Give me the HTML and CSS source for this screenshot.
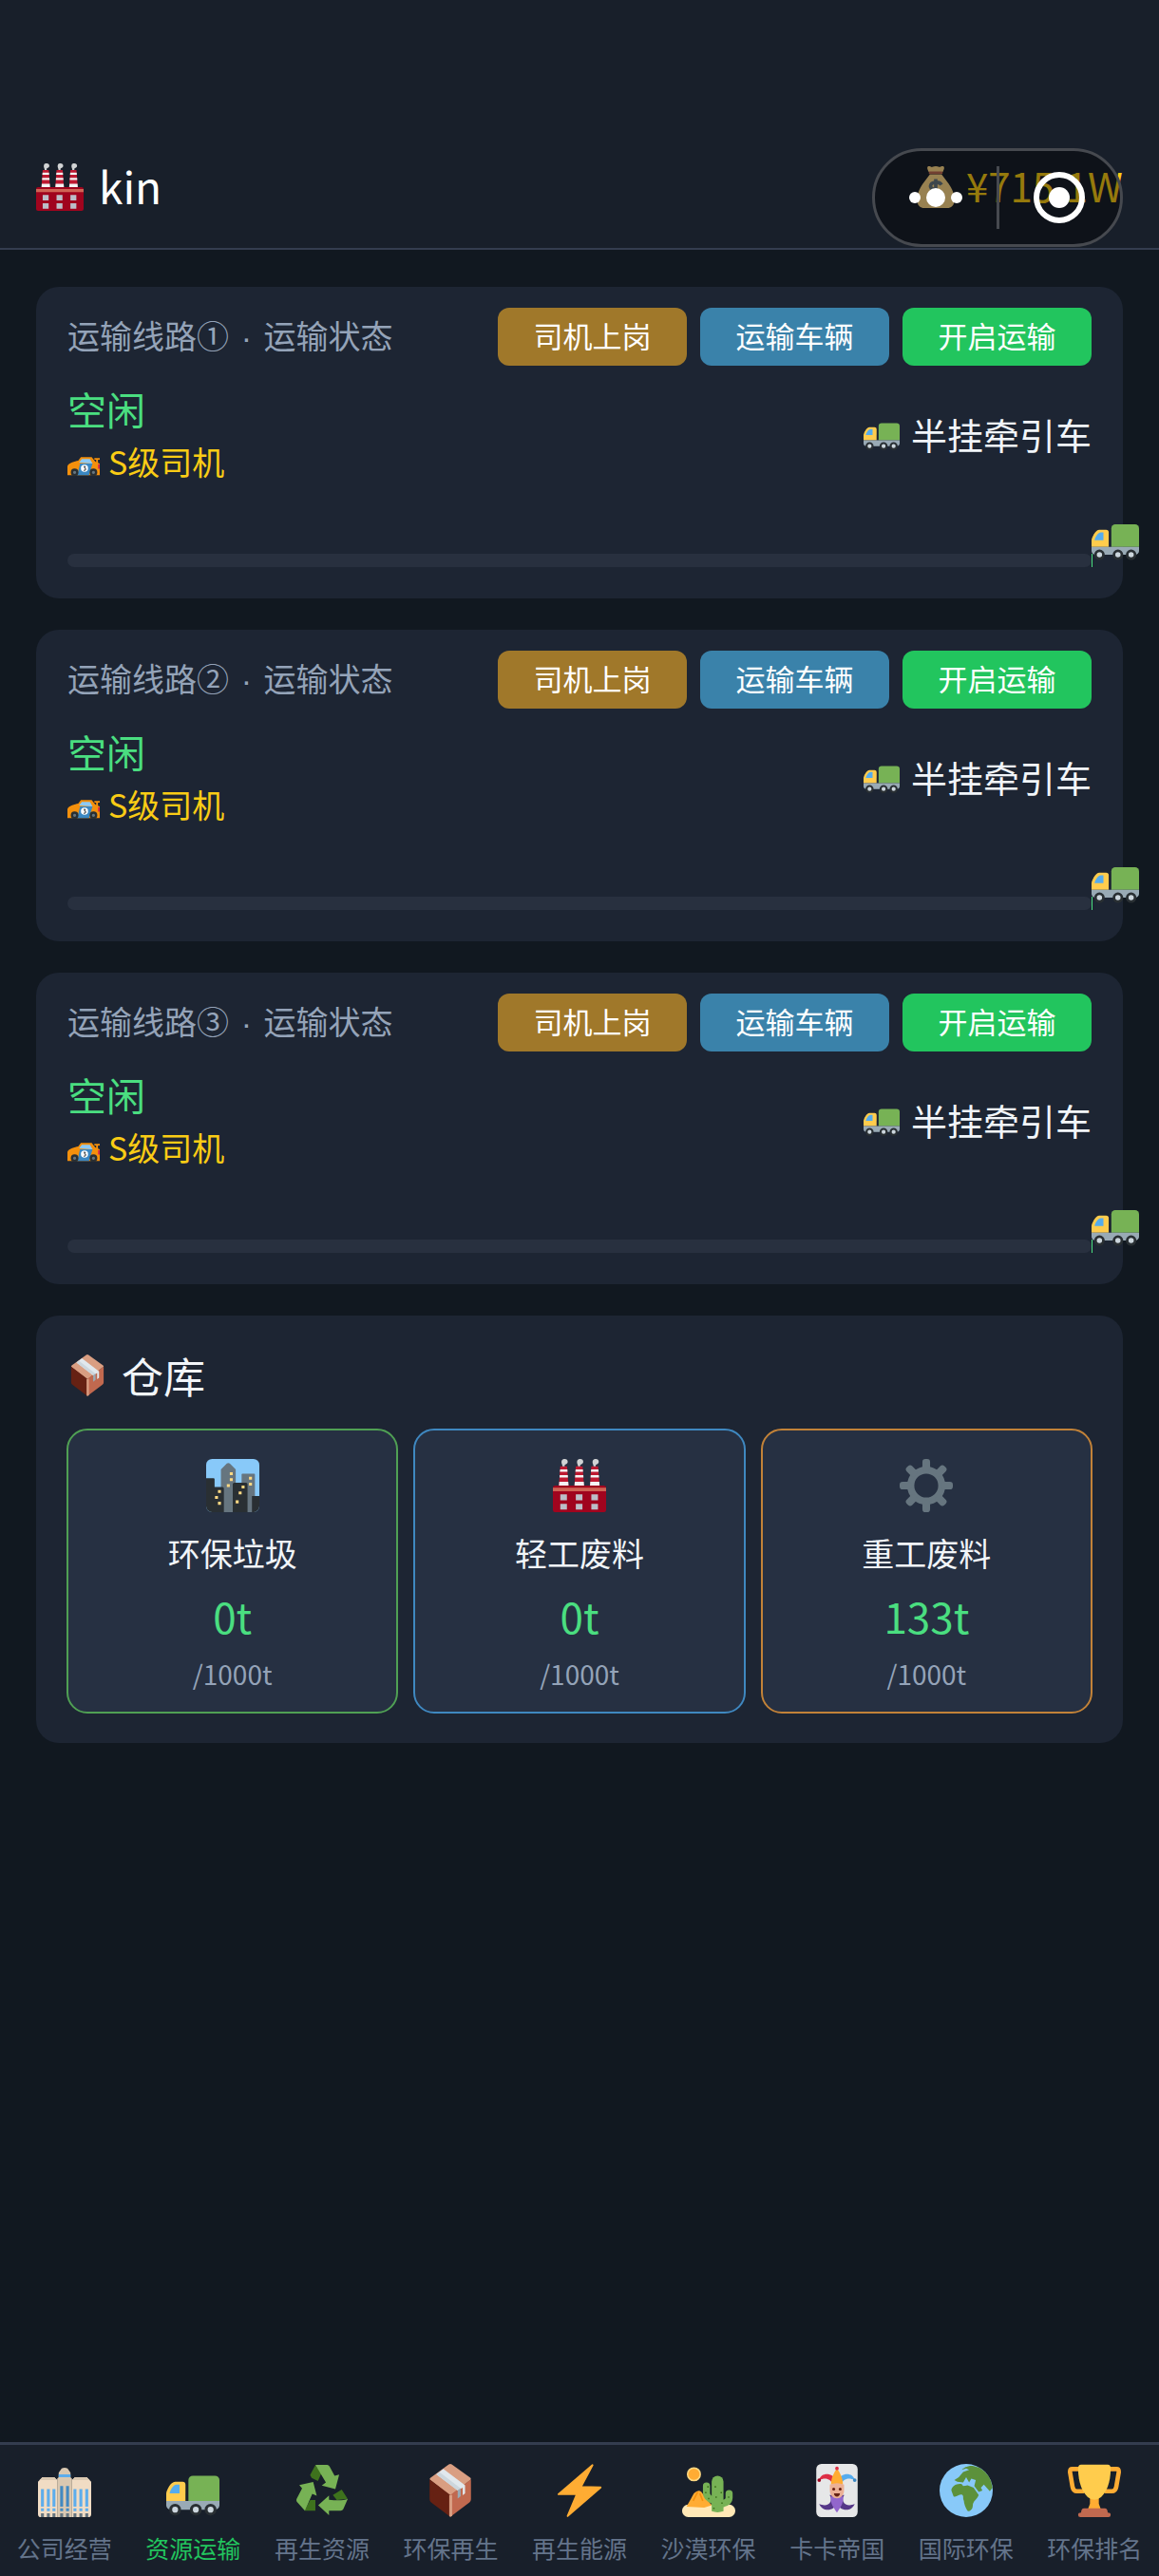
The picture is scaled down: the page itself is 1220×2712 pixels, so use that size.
FILE: index.html
```html
<!DOCTYPE html>
<html lang="zh-CN">
<head>
  <meta charset="UTF-8" />
  <meta name="viewport" content="width=device-width, initial-scale=1.0" />
  <title>资源运输</title>
  <link rel="stylesheet" href="styles.css">
</head>
<body>

  <!-- ICON SPRITES -->
  <svg class="sprites" aria-hidden="true">
    <symbol id="truck" viewBox="0 0 36 36">
      <path fill="#77B255" d="M15 11a3 3 0 0 1 3-3h15a3 3 0 0 1 3 3v14H15z"/>
      <path fill="#FFCC4D" d="M0 25v-5c0-2 3-8 6-8h5a2 2 0 0 1 2 2v11z"/>
      <path fill="#55ACEE" d="M2.200 20c.5-2 2.300-6 4.800-6h2v6z"/>
      <path fill="#99AAB5" d="M0 25h36v3a3 3 0 0 1-3 3H3a3 3 0 0 1-3-3z"/>
      <g fill="#CCD6DD" stroke="#292F33" stroke-width="2"><circle cx="6" cy="31" r="3"/><circle cx="20" cy="31" r="3"/><circle cx="30" cy="31" r="3"/></g>
    </symbol>

    <symbol id="factory" viewBox="0 0 36 36">
      <g id="chimney">
        <path fill="#BE1931" d="M5 5h4.600l1 14H4z"/>
        <path fill="#F4F4F4" d="M4.900 7h4.900l.1 1.600H4.700zM4.600 11h5.500l.1 1.600H4.500zM4.300 15.500h6.100l.2 2.500H4.100z"/>
        <path fill="#D1D3D4" d="M6.500 5c0-1-.7-1.500-.7-3A2 2 0 0 1 8 0c1.500 0 2.200 1 2 2.200S8.700 3.500 8 4v1z"/>
      </g>
      <use href="#chimney" x="10.500"/>
      <use href="#chimney" x="21"/>
      <rect y="18" width="36" height="18" rx="1.500" fill="#A0041E"/>
      <path fill="#CF6455" d="M0 19.500h36v2.300H0z"/>
      <path fill="#BCBEC8" d="M5 24h4.500v4H5zM15.500 24H20v4h-4.500zM26 24h4.500v4H26zM5 30.300h4.500v4H5zM15.500 30.300H20v4h-4.500zM26 30.300h4.500v4H26z"/>
    </symbol>

    <symbol id="money" viewBox="0 0 36 36">
      <path fill="#FDD888" d="M13 7h10l6 8c3 4 5 9 5 14 0 5-3 7-6 7H8c-3 0-6-2-6-7 0-5 2-10 5-14z"/>
      <path fill="#FDD888" d="M12 5c-1-2-2-4-.5-5C13-.5 14 1 15 .7S17 0 18 0s2 .5 3 .7S23-.5 24.500 0c1.500 1 .5 3-.5 5z"/>
      <rect x="12" y="4.500" width="12" height="2.300" rx="1" fill="#BF6952"/>
      <path fill="none" stroke="#67757F" stroke-width="3" d="M23 16c-2-3-9-3-9.500 1S23 20 23.500 24 16 29 13 25M18 11v19"/>
    </symbol>

    <symbol id="car" viewBox="0 0 36 36">
      <path fill="#F4900C" d="M0 33V23c2-4 8-5 12-6l3-4h12l4 5 5 2v13z"/>
      <path fill="#F4900C" d="M30 14h6v2h-2v5h-2v-5h-2z"/>
      <path fill="#8CCAF7" d="M13 19l3-4h9l3 5z"/>
      <path fill="#3B88C3" d="M14 20h14l-4 13H11z"/>
      <path fill="#DD2E44" d="M34 21h2v5h-2z"/>
      <circle cx="19" cy="25.500" r="4" fill="#FFF"/>
      <path fill="none" stroke="#292F33" stroke-width="1" d="M18 23.500h2l-1 1.700c2 0 2 2.500 0 2.500h-1"/>
      <g fill="#66757F" stroke="#292F33" stroke-width="2.500"><circle cx="8" cy="30" r="3"/><circle cx="29" cy="30" r="3"/></g>
    </symbol>

    <symbol id="package" viewBox="0 0 36 36">
      <path fill="#D99E82" d="M17 .4q1-.7 2 0l12.500 9q.8.7 0 1.500L18 21.500 4.500 11q-.8-.8 0-1.500z"/>
      <path fill="#662113" d="M4 10.500l14 10.500v14.800L5 26q-1-.7-1-2z"/>
      <path fill="#C1694F" d="M32 10.500L18 21v14.800L31 26q1-.7 1-2z"/>
      <path fill="#D99E82" d="M17.300 21h2v14.200l-1.300.6-.7-.4z"/>
      <path fill="#E1E8ED" d="M8.600 7l4.700-3.700L28 14.500V20l-1.600 1.200V16L23 18z"/>
      <path fill="#CCD6DD" d="M8.600 7l2-1.600L25 16.500 23 18z"/>
      <path fill="#99AAB5" d="M23 18l2-1.600v5.500L23 23.500z"/>
    </symbol>

    <symbol id="city" viewBox="0 0 36 36">
      <rect width="36" height="36" rx="4" fill="#88C9F9"/>
      <path fill="#66757F" d="M10 36V7l4-4q1-.6 2 0l4 4v29zM24 36V10.500q0-.5.500-.5h8q.5 0 .5.500V36z"/>
      <path fill="#292F33" d="M4 36a4 4 0 0 1-4-4V13h5q.7 0 .7.700V19H11q1 0 1 1v16zM18 36V17q0-1 1-1h8q1 0 1 1v19zM31 36V25h5v7a4 4 0 0 1-4 4z"/>
      <path fill="#FFD983" d="M16 9h2v2h-2zM16 13h2v2h-2zM14 17h2v2h-2zM29 12h2v2h-2zM29 16h2v2h-2zM8 21h2v2H8zM6 25h2v2H6zM8 29h2v2H8zM24 18h2v2h-2zM22 22h2v2h-2zM20 28h2v2h-2z"/>
    </symbol>

    <symbol id="gear" viewBox="0 0 36 36">
      <circle cx="18" cy="18" r="10.500" fill="none" stroke="#66757F" stroke-width="4.800"/>
      <g fill="#66757F">
        <g id="teeth"><rect x="15.400" y="0" width="5.200" height="8" rx="2"/><rect x="15.400" y="28" width="5.200" height="8" rx="2"/></g>
        <use href="#teeth" transform="rotate(45 18 18)"/>
        <use href="#teeth" transform="rotate(90 18 18)"/>
        <use href="#teeth" transform="rotate(135 18 18)"/>
      </g>
    </symbol>

    <symbol id="office" viewBox="0 0 36 36">
      <path fill="#F1DCC4" d="M0 34V12l3-3h8l2 2v25H2a2 2 0 0 1-2-2zM36 34V12l-3-3h-8l-2 2v25h11a2 2 0 0 0 2-2z"/>
      <path fill="#DAC8B1" d="M3 9h8l2 2H1zM25 9h8l2 2H23zM13 36V10l1-1V6l2-3q2-1 4 0l2 3v3l1 1v26z"/>
      <path fill="#5DADEC" d="M14 7h8v2h-8zM2 17h2v12H2zM6 17h2v12H6zM9.800 17h2v12h-2zM24 17h2v12h-2zM28 17h2v12h-2zM32 17h2v12h-2zM2 30h2v2H2zM6 30h2v2H6zM9.800 30h2v2h-2zM24 30h2v2h-2zM28 30h2v2h-2zM32 30h2v2h-2z"/>
      <path fill="#4289C1" d="M15 15h2v14h-2zM19 15h2v14h-2zM15 30h2v2h-2zM19 30h2v2h-2z"/>
      <path fill="#66757F" d="M2 33.500h2V36H2zM6 33.500h2V36H6zM9.800 33.500h2V36h-2zM15 33.500h2V36h-2zM19 33.500h2V36h-2zM24 33.500h2V36h-2zM28 33.500h2V36h-2zM32 33.500h2V36h-2z"/>
    </symbol>

    <symbol id="recycle" viewBox="0 0 36 36">
      <path fill="#3E721D" d="M9.900 7.500L13.500.8l4 5.700-2.300 5L11 9.500zM25.300 21l6-3.600 4 6.200-7.300.8zM10 24.400h3.500v7.300H6.200z"/>
      <path fill="#77B255" d="M13.500.6h8q1 0 1.500 1L26.500 8l3.100-.8L27 17.100l-9.200-2.500 2.800-2zM15.400 28l7.300-6.600v2.800q9 1 12.700-.6l-3 7q-.6 1.100-1.700 1.100h-8v3zM2.600 14.300L12 12.200l2.400 9.400-3-1.300-5 11.400L.9 25.500q-.6-1 0-2L4.500 16.500z"/>
    </symbol>

    <symbol id="bolt" viewBox="0 0 36 36">
      <path fill="#FFAC33" stroke="#FFAC33" stroke-width="1.200" stroke-linejoin="round" d="M26.800.8L19 15.500l13.300.4L10 35.300l6.200-14.800H3.800z"/>
    </symbol>

    <symbol id="desert" viewBox="0 0 36 36">
      <circle cx="8" cy="7" r="4.300" fill="#FFAC33" stroke="#FFD983" stroke-width="1"/>
      <rect y="27.500" width="36" height="8.500" rx="4.200" fill="#FFE8B6"/>
      <path fill="#FFAC33" d="M3 29l5-9q3-3 5-1l7 9-5 1.500z"/>
      <path fill="none" stroke="#F4900C" stroke-width="1" d="M10.500 19l-3 6M12 20l2 5"/>
      <path fill="none" stroke="#77B255" stroke-width="4.800" stroke-linecap="round" d="M16.500 15v5q0 3 5 5M31.800 20v3q0 3-5 4"/>
      <path fill="#77B255" d="M20 12a4 4 0 0 1 8 0v20q-4 1.500-8 0z"/>
      <path fill="#3E721D" d="M22 15h1v1h-1zM26 19h1v1h-1zM22.500 22h1v1h-1zM26.500 26h1v1h-1zM21 29.500h1v1h-1zM15.500 19h1v1h-1zM17.500 23h1v1h-1zM31 22h1v1h-1zM17 15h1v1h-1z"/>
    </symbol>

    <symbol id="joker" viewBox="0 0 36 36">
      <rect x="4" width="28" height="36" rx="3.500" fill="#E6E7E8"/>
      <path fill="#DD2E44" d="M15 14c-1-4-5-5-9-3 1-6 10-5 11 0z"/>
      <path fill="#55ACEE" d="M21 14c1-4 5-5 9-3-1-6-10-5-11 0z"/>
      <path fill="#FFAC33" d="M14 14c0-5 2-8 4-11 2 3 4 6 4 11z"/>
      <circle cx="18" cy="3" r="1.200" fill="#DD2E44"/><circle cx="6" cy="11" r="1.200" fill="#A0041E"/><circle cx="30" cy="11" r="1.200" fill="#3B88C3"/>
      <path fill="#553788" d="M13 21c3 4-1 9-7 6 2 6 11 5 12-1 1 6 10 7 12 1-6 3-10-2-7-6z"/>
      <path fill="#9266CC" d="M14 22h8c1 4-2 8-4 11-2-3-5-7-4-11z"/>
      <path fill="#EBB096" d="M13.200 14q4.800-2 9.600 0v4c0 7-9.600 7-9.600 0z"/>
      <path fill="#662113" d="M16 20h4c0 3-4 3-4 0z"/><circle cx="15.800" cy="17" r="1" fill="#662113"/><circle cx="20.200" cy="17" r="1" fill="#662113"/>
    </symbol>

    <symbol id="globe" viewBox="0 0 36 36">
      <circle cx="18" cy="18" r="18" fill="#88C9F9"/>
      <path fill="#5C913B" d="M15 4c2-2 5-3 8-2.600l4 1.200A18 18 0 0 1 35.800 16l-1.800 2.500-4-4.500-2 2 1 2-2.500 1-3-4 1-4-3-1-1.500 2.500L18 9l-2 3.500-4-.5-2-1 3-2 3-3.500 4-1.500-2-1z"/>
      <path fill="#5C913B" d="M8 18c0-3 4-5 7-4.300l1 1.300 3-.5 4 1.500 3.500 5c-1 3-4 4-4 7s-2 4-3 4-3-5-3-7c-1-2 0-3-1-4-2-1-4 2-6 1z"/>
    </symbol>

    <symbol id="trophy" viewBox="0 0 36 36">
      <path fill="none" stroke="#FFAC33" stroke-width="3" stroke-linejoin="round" d="M8 3.500H3q-1.500 0-1.500 2l1.700 10q.5 3 3 3H11M28 3.500h5q1.500 0 1.500 2l-1.700 10q-.5 3-3 3H25"/>
      <path fill="#FFAC33" d="M15 22h6v5l1.500 4h-9L15 27z"/>
      <path fill="#FFCC4D" d="M9 .5h18q2 0 2 2.500c0 10-3 16-6.500 19.500q-4.500 3.500-9 0C10 19 7 13 7 3Q7 .5 9 .5z"/>
      <path fill="#C1694F" d="M11 30h14q2 0 2 3 2 0 2 1.500T27.500 36h-19Q7 36 7 34.500T9 33q0-3 2-3z"/>
    </symbol>
  </svg>

  <!-- HEADER -->
  <header class="header">
    <div class="company">
      <svg class="logo"><use href="#factory"/></svg>
      <span>kin</span>
    </div>
    <div class="balance">
      <svg class="balance-icon"><use href="#money"/></svg>
      <span>¥715.1W</span>
    </div>
    <div class="capsule">
      <button class="capsule-btn" aria-label="更多">
        <svg class="dots" viewBox="0 0 56 20" fill="#fff"><circle cx="6" cy="10" r="6"/><circle cx="28" cy="10" r="10"/><circle cx="50" cy="10" r="6"/></svg>
      </button>
      <button class="capsule-btn" aria-label="关闭">
        <svg class="target" viewBox="0 0 54 54"><circle cx="27" cy="27" r="24" fill="none" stroke="#fff" stroke-width="6"/><circle cx="27" cy="27" r="11" fill="#fff"/></svg>
      </button>
    </div>
  </header>

  <main class="content">

    <!-- TRANSPORT LINES -->
    <section class="card route">
      <div class="route-head">
        <h2 class="route-title">运输线路① <span class="sep">·</span> 运输状态</h2>
        <div class="actions">
          <button class="btn btn-driver">司机上岗</button>
          <button class="btn btn-vehicle">运输车辆</button>
          <button class="btn btn-start">开启运输</button>
        </div>
      </div>
      <div class="route-info">
        <div>
          <div class="status">空闲</div>
          <div class="driver"><svg class="driver-icon"><use href="#car"/></svg>S级司机</div>
        </div>
        <div class="vehicle"><svg class="vehicle-icon"><use href="#truck"/></svg>半挂牵引车</div>
      </div>
      <div class="track">
        <svg class="track-truck"><use href="#truck"/></svg>
      </div>
    </section>

    <section class="card route">
      <div class="route-head">
        <h2 class="route-title">运输线路② <span class="sep">·</span> 运输状态</h2>
        <div class="actions">
          <button class="btn btn-driver">司机上岗</button>
          <button class="btn btn-vehicle">运输车辆</button>
          <button class="btn btn-start">开启运输</button>
        </div>
      </div>
      <div class="route-info">
        <div>
          <div class="status">空闲</div>
          <div class="driver"><svg class="driver-icon"><use href="#car"/></svg>S级司机</div>
        </div>
        <div class="vehicle"><svg class="vehicle-icon"><use href="#truck"/></svg>半挂牵引车</div>
      </div>
      <div class="track">
        <svg class="track-truck"><use href="#truck"/></svg>
      </div>
    </section>

    <section class="card route">
      <div class="route-head">
        <h2 class="route-title">运输线路③ <span class="sep">·</span> 运输状态</h2>
        <div class="actions">
          <button class="btn btn-driver">司机上岗</button>
          <button class="btn btn-vehicle">运输车辆</button>
          <button class="btn btn-start">开启运输</button>
        </div>
      </div>
      <div class="route-info">
        <div>
          <div class="status">空闲</div>
          <div class="driver"><svg class="driver-icon"><use href="#car"/></svg>S级司机</div>
        </div>
        <div class="vehicle"><svg class="vehicle-icon"><use href="#truck"/></svg>半挂牵引车</div>
      </div>
      <div class="track">
        <svg class="track-truck"><use href="#truck"/></svg>
      </div>
    </section>

    <!-- WAREHOUSE -->
    <section class="card warehouse">
      <h2 class="warehouse-title"><svg class="warehouse-icon"><use href="#package"/></svg>仓库</h2>
      <div class="stock">
        <div class="stock-item green">
          <svg class="stock-icon"><use href="#city"/></svg>
          <div class="stock-name">环保垃圾</div>
          <div class="stock-amount">0t</div>
          <div class="stock-max">/1000t</div>
        </div>
        <div class="stock-item blue">
          <svg class="stock-icon"><use href="#factory"/></svg>
          <div class="stock-name">轻工废料</div>
          <div class="stock-amount">0t</div>
          <div class="stock-max">/1000t</div>
        </div>
        <div class="stock-item orange">
          <svg class="stock-icon"><use href="#gear"/></svg>
          <div class="stock-name">重工废料</div>
          <div class="stock-amount">133t</div>
          <div class="stock-max">/1000t</div>
        </div>
      </div>
    </section>
  </main>

  <!-- BOTTOM TABS -->
  <nav class="tabs">
    <a href="#" class="tab"><svg class="tab-icon"><use href="#office"/></svg>公司经营</a>
    <a href="#" class="tab active"><svg class="tab-icon"><use href="#truck"/></svg>资源运输</a>
    <a href="#" class="tab"><svg class="tab-icon"><use href="#recycle"/></svg>再生资源</a>
    <a href="#" class="tab"><svg class="tab-icon"><use href="#package"/></svg>环保再生</a>
    <a href="#" class="tab"><svg class="tab-icon"><use href="#bolt"/></svg>再生能源</a>
    <a href="#" class="tab"><svg class="tab-icon"><use href="#desert"/></svg>沙漠环保</a>
    <a href="#" class="tab"><svg class="tab-icon"><use href="#joker"/></svg>卡卡帝国</a>
    <a href="#" class="tab"><svg class="tab-icon"><use href="#globe"/></svg>国际环保</a>
    <a href="#" class="tab"><svg class="tab-icon"><use href="#trophy"/></svg>环保排名</a>
  </nav>

</body>
</html>
```
FILE: styles.css
```css
* {
  box-sizing: border-box;
}

body {
  margin: 0;
  min-height: 100vh;
  display: flex;
  flex-direction: column;
  background: #111820;
  color: #f1f5f9;
  font-family: "Noto Sans CJK SC", sans-serif;
  overflow-x: hidden;
}

h2 {
  margin: 0;
  font-weight: normal;
}

button {
  border: none;
  padding: 0;
  color: #fff;
  font-family: inherit;
  cursor: pointer;
}

svg {
  flex-shrink: 0;
}

.sprites {
  position: absolute;
  width: 0;
  height: 0;
}

/* ---------------
   HEADER
   ---------------*/
.header {
  position: relative;
  display: flex;
  justify-content: space-between;
  padding: 165px 38px 32px;
  background: #181f2a;
  border-bottom: 2px solid #343d4f;
  line-height: 60px;
}

.company,
.balance {
  display: flex;
  align-items: center;
}

.company span,
.balance span {
  padding-bottom: 4px;
}

.company {
  gap: 16px;
  color: #fff;
  font-size: 46px;
}

.logo {
  width: 50px;
  height: 50px;
}

.balance {
  gap: 10px;
  color: #facc15;
  font-size: 42px;
}

.balance-icon {
  width: 44px;
  height: 44px;
}

/* sits over the balance */
.capsule {
  position: absolute;
  top: 156px;
  right: 38px;
  width: 264px;
  height: 104px;
  display: flex;
  padding: 16px 0;
  background: rgba(0, 0, 0, 0.4);
  border: 3px solid #46494f;
  border-radius: 52px;
}

.capsule-btn {
  flex: 1;
  display: flex;
  align-items: center;
  justify-content: center;
  background: none;
}

.capsule-btn + .capsule-btn {
  border-left: 3px solid #46494f;
}

.dots {
  width: 56px;
  height: 20px;
}

.target {
  width: 54px;
  height: 54px;
}

/* ---------------
   CARDS
   ---------------*/
.content {
  flex: 1;
  display: flex;
  flex-direction: column;
  gap: 33px;
  padding: 39px 38px;
}

.card {
  background: #1d2533;
  border-radius: 24px;
}

.route {
  padding: 22px 33px 33px;
}

.route-head,
.route-info {
  display: flex;
  justify-content: space-between;
  align-items: center;
}

.route-title {
  padding-bottom: 4px;
  color: #94a3b8;
  font-size: 34px;
}

.sep {
  padding: 0 5px;
  font-family: "Liberation Sans", sans-serif;
}

.actions {
  display: flex;
  gap: 14px;
}

.btn {
  width: 199px;
  height: 61px;
  padding-bottom: 4px;
  border-radius: 12px;
  font-size: 31px;
}

.btn-driver {
  background: #a0782a;
}

.btn-vehicle {
  background: #3a82aa;
}

.btn-start {
  background: #22c55e;
}

.route-info {
  margin-top: 15px;
}

.status {
  color: #4ade80;
  font-size: 41px;
  line-height: 60px;
}

.driver {
  display: flex;
  align-items: center;
  gap: 9px;
  color: #facc15;
  font-size: 34px;
  line-height: 52px;
}

.driver-icon {
  width: 34px;
  height: 34px;
}

.vehicle {
  display: flex;
  align-items: center;
  gap: 12px;
  font-size: 38px;
}

.vehicle-icon {
  width: 38px;
  height: 38px;
}

.track {
  position: relative;
  height: 14px;
  margin-top: 71px;
  background: #28303f;
  border-radius: 7px;
}

.track::after {
  content: "";
  position: absolute;
  top: 0;
  left: 100%;
  width: 1px;
  height: 100%;
  background: #4ade80;
}

.track-truck {
  position: absolute;
  left: 100%;
  bottom: 6px;
  width: 50px;
  height: 50px;
}

/* ---------------
   WAREHOUSE
   ---------------*/
.warehouse {
  padding: 31px 32px;
}

.warehouse-title {
  display: flex;
  align-items: center;
  gap: 14px;
  font-size: 44px;
  line-height: 64px;
}

.warehouse-icon {
  width: 44px;
  height: 44px;
}

.stock {
  display: grid;
  grid-template-columns: repeat(3, 1fr);
  gap: 16px;
  margin-top: 24px;
}

.stock-item {
  display: flex;
  flex-direction: column;
  align-items: center;
  padding: 30px 10px 20px;
  background: #263042;
  border: 2px solid;
  border-radius: 22px;
}

.green {
  border-color: #50a054;
}

.blue {
  border-color: #3f88c0;
}

.orange {
  border-color: #c28238;
}

.stock-icon {
  width: 56px;
  height: 56px;
}

.stock-name {
  margin-top: 18px;
  font-size: 34px;
  line-height: 50px;
}

.stock-amount {
  margin-top: 11px;
  color: #4ade80;
  font-size: 44px;
  line-height: 60px;
}

.stock-max {
  margin-top: 11px;
  color: #94a3b8;
  font-size: 28px;
  line-height: 40px;
}

/* ---------------
   BOTTOM TABS
   ---------------*/
.tabs {
  display: flex;
  padding: 20px 0 12px;
  background: #181f2a;
  border-top: 3px solid #343d4f;
}

.tab {
  flex: 1;
  display: flex;
  flex-direction: column;
  align-items: center;
  gap: 14px;
  color: #64748b;
  font-size: 25px;
  line-height: 36px;
  text-decoration: none;
  white-space: nowrap;
}

.tab.active {
  color: #22c55e;
}

.tab-icon {
  width: 56px;
  height: 56px;
}
```
